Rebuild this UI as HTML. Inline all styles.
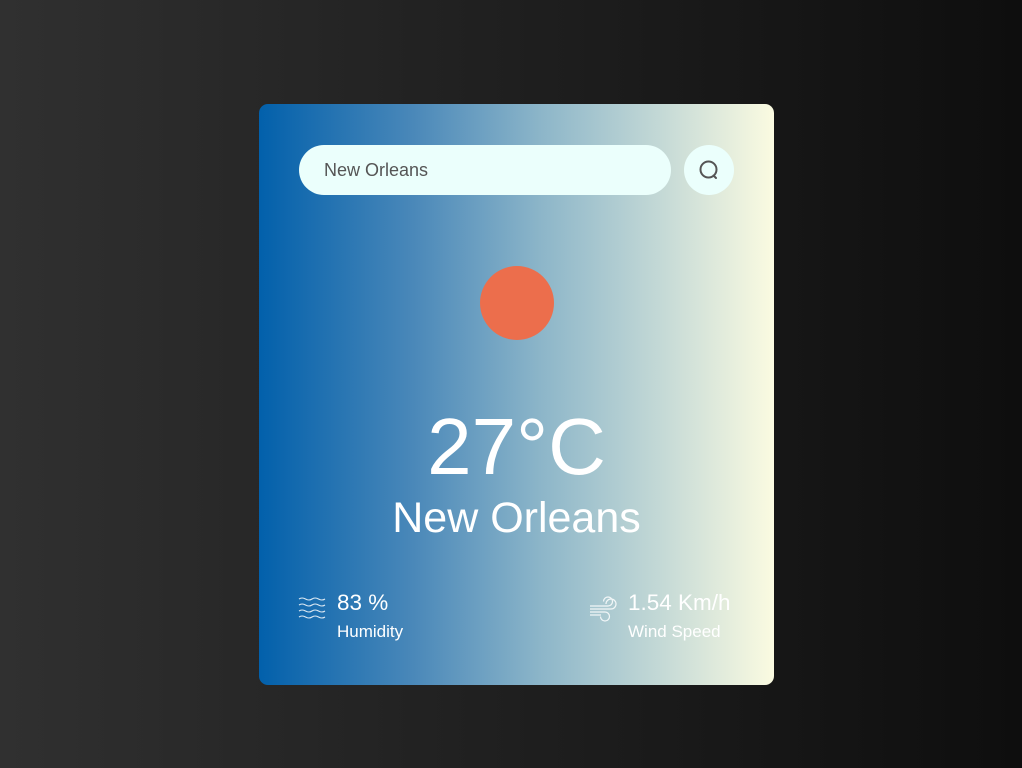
<!DOCTYPE html>
<html><head><meta charset="utf-8"><style>
html,body{margin:0;padding:0;width:1022px;height:768px;overflow:hidden}
body{background:linear-gradient(90deg,#303030,#0e0e0e);font-family:"Liberation Sans",sans-serif;position:relative}
.card{position:absolute;left:259px;top:104px;width:515px;height:581px;border-radius:9px;background:linear-gradient(90deg,#0260ab 0%,#4a88b9 30%,#8db6c9 55%,#c4d9d6 78%,#fbfbe1 100%)}
.inp{position:absolute;left:40px;top:41px;width:372px;height:50px;border-radius:25px;background:#ebfffc;color:#555;font-size:18px;line-height:50px;padding-left:25px;box-sizing:border-box}
.btn{position:absolute;left:425px;top:41px;width:50px;height:50px;border-radius:50%;background:#ebfffc}
.sun{position:absolute;left:221px;top:162px;width:74px;height:74px;border-radius:50%;background:#ec6e4c}
.temp{position:absolute;left:0;width:515px;text-align:center;top:293px;color:#fff;font-size:80px;line-height:100px}
.city{position:absolute;left:0;width:515px;text-align:center;top:389px;color:#fff;font-size:43px;line-height:50px}
.v{position:absolute;color:#fff;font-size:22.5px}
.l{position:absolute;color:#fff;font-size:17px}
</style></head><body>
<div class="card">
<div class="inp">New Orleans</div>
<div class="btn"><svg width="50" height="50" viewBox="0 0 50 50"><circle cx="24.5" cy="24.5" r="8" fill="none" stroke="#555" stroke-width="2"/><path d="M29.5 30.5 L32 33" stroke="#555" stroke-width="2" stroke-linecap="round"/></svg></div>
<div class="sun"></div>
<div class="temp">27°C</div>
<div class="city">New Orleans</div>
<svg style="position:absolute;left:39px;top:492px" width="28" height="26" viewBox="0 0 28 26" fill="none" stroke="#fff" stroke-width="1.1" opacity="0.85">
<path d="M1 3q3-2 6.5 0t6.5 0 6.5 0 6.5 0M1 9q3-2 6.5 0t6.5 0 6.5 0 6.5 0M1 15q3-2 6.5 0t6.5 0 6.5 0 6.5 0M1 21q3-2 6.5 0t6.5 0 6.5 0 6.5 0"/></svg>
<div class="v" style="left:78px;top:486px">83 %</div>
<div class="l" style="left:78px;top:518px">Humidity</div>
<svg style="position:absolute;left:330px;top:491px" width="28" height="28" viewBox="0 0 28 28" fill="none" stroke="#fff" stroke-width="1.2" opacity="0.85">
<path d="M1 11h18a4.5 4.5 0 1 0-4.5-4.5M1 14h21a5 5 0 1 0-5-5M1 17h15a4.5 4.5 0 1 1-4.5 4.5M1 20h11"/></svg>
<div class="v" style="left:369px;top:486px">1.54 Km/h</div>
<div class="l" style="left:369px;top:518px">Wind Speed</div>
</div>
</body></html>
